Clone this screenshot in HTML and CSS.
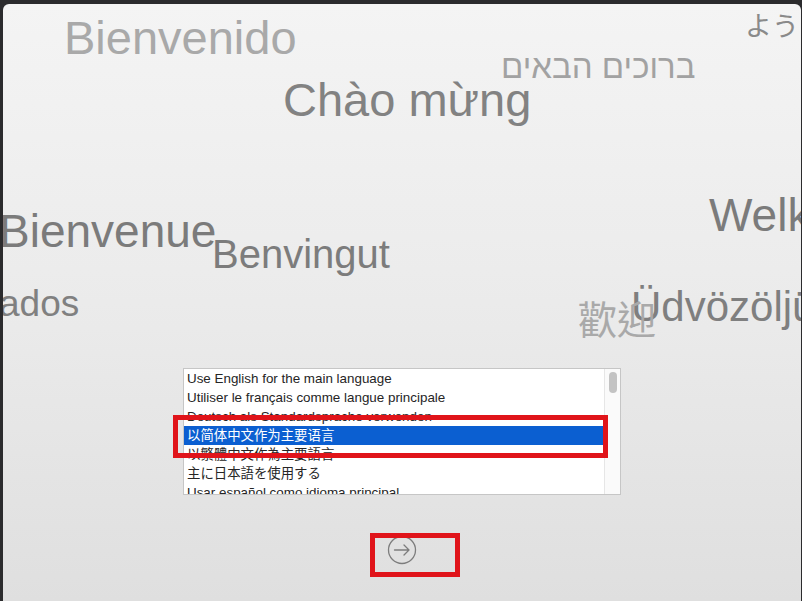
FILE: index.html
```html
<!DOCTYPE html>
<html lang="en">
<head>
  <meta charset="UTF-8">
  <meta name="viewport" content="width=device-width, initial-scale=1.0">
  <title>Language</title>
  <link rel="stylesheet" href="styles.css">
</head>
<body>
  <div class="window">
    <!-- greetings floating around the screen -->
    <div class="greetings">
      <span class="hello w-es">Bienvenido</span>
      <span class="hello w-he" dir="rtl">ברוכים הבאים</span>
      <span class="hello w-ja">よう</span>
      <span class="hello w-vi">Chào mừng</span>
      <span class="hello w-fr">Bienvenue</span>
      <span class="hello w-ca">Benvingut</span>
      <span class="hello w-pt">ados</span>
      <span class="hello w-nl">Welkom</span>
      <span class="hello w-hu">Üdvözöljük</span>
      <span class="hello w-tw">歡迎</span>
    </div>

    <div class="lang_list">
      <ul class="rows">
        <li>Use English for the main language</li>
        <li>Utiliser le français comme langue principale</li>
        <li>Deutsch als Standardsprache verwenden</li>
        <li class="selected">以简体中文作为主要语言</li>
        <li>以繁體中文作為主要語言</li>
        <li>主に日本語を使用する</li>
        <li>Usar español como idioma principal</li>
      </ul>
      <div class="scrollbar"><div class="thumb"></div></div>
    </div>

    <button type="button" class="next">
      <svg width="30" height="30" viewBox="0 0 30 30">
        <circle cx="15" cy="15" r="13.5" fill="none" stroke="#7d7d7d" stroke-width="1.3"/>
        <path d="M7.5 15 H22 M17 10 L22 15 L17 20" fill="none" stroke="#7d7d7d" stroke-width="1.3" stroke-linecap="round" stroke-linejoin="round"/>
      </svg>
    </button>

    <div class="mark mark_row"></div>
    <div class="mark mark_btn"></div>
  </div>
</body>
</html>
```

FILE: styles.css
```css
body {
  margin: 0;
  background-color: #2b2b2d;
  height: 601px;
  overflow: hidden;
}
.window {
  position: relative;
  margin: 4px 0 0 3px;
  width: 798px;
  height: 597px;
  border-radius: 6px 6px 0 0;
  overflow: hidden;
  background: linear-gradient(#f4f4f4, #ebebeb 50%, #dfdfdf);
  display: flex;
  flex-direction: column;
  align-items: center;
  padding-top: 364px;
  box-sizing: border-box;
  font-family: "Liberation Sans", "Noto Sans CJK SC", sans-serif;
}

/* greetings */
.greetings {
  position: absolute;
  inset: 0;
}
.hello {
  position: absolute;
  white-space: nowrap;
  line-height: 1;
  color: #7d7d7d;
}
.w-es { left: 61px; top: 10px; font-size: 47px; color: #a9a9a9; }
.w-he { left: 498px; top: 46px; font-size: 33px; color: #a2a2a2; }
.w-ja { left: 742px; top: 7px; font-size: 27px; color: #8a8a8a; font-family: "Noto Sans CJK JP", sans-serif; }
.w-vi { left: 280px; top: 72px; font-size: 47px; color: #828282; }
.w-fr { left: -4px; top: 204px; font-size: 46px; color: #7b7b7b; }
.w-ca { left: 209px; top: 230px; font-size: 40px; color: #7c7c7c; }
.w-pt { left: -4px; top: 281px; font-size: 37px; color: #808080; }
.w-nl { left: 706px; top: 188px; font-size: 46px; color: #7b7b7b; }
.w-hu { left: 628px; top: 282px; font-size: 42px; color: #7f7f7f; }
.w-tw { left: 575px; top: 294px; font-size: 39px; color: #a9a9a9; font-family: "Noto Sans CJK TC", sans-serif; }

/* language list */
.lang_list {
  position: relative;
  width: 438px;
  height: 127px;
  box-sizing: border-box;
  border: 1px solid #c6c6c6;
  background-color: white;
  overflow: hidden;
  display: flex;
}
.rows {
  list-style: none;
  margin: 0;
  padding: 0;
  flex: 1;
}
.rows li {
  height: 19px;
  line-height: 19px;
  padding-left: 3px;
  font-size: 13.4px;
  color: #252525;
  white-space: nowrap;
}
.rows li.selected {
  background-color: #0b5fd1;
  color: white;
}
.scrollbar {
  width: 15px;
  border-left: 1px solid #e6e6e6;
  background-color: #fafafa;
  display: flex;
  justify-content: center;
  padding-top: 3px;
}
.thumb {
  width: 8px;
  height: 21px;
  border-radius: 4px;
  background-color: #c3c3c3;
}

.next {
  margin-top: 40px;
  width: 30px;
  height: 30px;
  padding: 0;
  border: none;
  background: none;
}
.next svg {
  display: block;
}

/* red annotation frames */
.mark {
  position: absolute;
  border: 5px solid #e0141a;
  box-sizing: border-box;
}
.mark_row {
  left: 170px;
  top: 411px;
  width: 435px;
  height: 43px;
}
.mark_btn {
  left: 367px;
  top: 529px;
  width: 90px;
  height: 44px;
}
```
